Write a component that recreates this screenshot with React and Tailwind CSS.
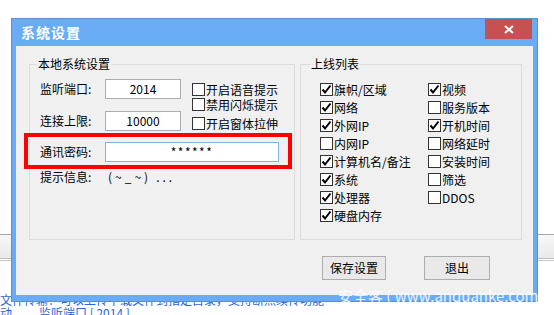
import { Fragment } from 'react'

const font = "font-['Noto_Sans_CJK_SC','Liberation_Sans',sans-serif]"

function Check({ on }) {
  return (
    <span className="w-[13px] h-[13px] border border-[#333] bg-white flex items-center justify-center shrink-0">
      {on && (
        <svg width="11" height="11" viewBox="0 0 11 11">
          <path d="M1.5 5.5 L4 8.5 L9.5 1.5" fill="none" stroke="#000" strokeWidth="2" />
        </svg>
      )}
    </span>
  )
}

function CheckItem({ on, label, className = '' }) {
  return (
    <div className={`flex items-center h-[13px] gap-[1px] text-[12px] leading-none whitespace-nowrap ${className}`}>
      <Check on={on} />
      <span>{label}</span>
    </div>
  )
}

const online = [
  ['旗帜/区域', true, '视频', true],
  ['网络', true, '服务版本', false],
  ['外网IP', true, '开机时间', true],
  ['内网IP', false, '网络延时', false],
  ['计算机名/备注', true, '安装时间', false],
  ['系统', true, '筛选', false],
  ['处理器', true, 'DDOS', false],
  ['硬盘内存', true, null, false],
]

export default function App() {
  return (
    <div className={`relative w-[554px] h-[315px] overflow-hidden bg-white text-black ${font}`}>
      {/* page behind the dialog */}
      <div className="flex flex-col">
        <div className="h-[234px]" />
        <div className="h-[1px] bg-[#A6A6A6]" />
        <div className="h-[23px] bg-gradient-to-b from-[#F8F8F8] to-[#E9E9E9]" />
        <div className="h-[1px] bg-[#BDBDBD]" />
        <div className="h-[1px] bg-white" />
        <div className="h-[1px] bg-[#C8C8C8]" />
        <div className="h-[32px]" />
        <div className="h-[13px] text-[12px] leading-[13px] text-[#2B63D9] whitespace-nowrap">
          文件传输：可以上传下载文件到指定目录，支持断点续传功能
        </div>
        <div className="h-[13px] flex text-[12px] leading-[13px] text-[#2B63D9] whitespace-nowrap">
          <span className="w-[39px]">动</span>
          <span>监听端口 [ 2014 ]</span>
        </div>
      </div>

      {/* dialog window */}
      <div className="absolute left-[11px] top-[18px] w-[527px] h-[284px] border border-[#5B8FD2] bg-[#6AABF5] flex flex-col px-[4px] pb-[6px]">
        <div className="h-[27px] flex justify-between shrink-0">
          <span className="pl-[5px] pt-[6px] text-[14px] leading-[14px] font-bold text-white tracking-[1px]">系统设置</span>
          <div className="w-[47px] h-[20px] mr-[1px] bg-[#C75050] flex items-center justify-center">
            <svg width="10" height="9" viewBox="0 0 10 9">
              <path d="M1 1 L9 8 M9 1 L1 8" stroke="#fff" strokeWidth="2" />
            </svg>
          </div>
        </div>

        <div className="relative flex-1 bg-[#F0F0F0] flex flex-col">
          <div className="flex gap-[5px] pt-[18px] pl-[13px]">
            {/* 本地系统设置 */}
            <div className="relative w-[266px] h-[176px] border border-[#DCDCDC]">
              <span className="absolute left-[7px] -top-[8px] px-[1px] bg-[#F0F0F0] text-[12px] leading-[14px]">本地系统设置</span>
              <div className="flex">
                <div className="flex flex-col pl-[10px] pt-[14px]">
                  <div className="flex items-center h-[20px]">
                    <span className="w-[65px] text-[12px]">监听端口:</span>
                    <div className="w-[76px] h-[20px] border border-[#ABADB3] bg-white flex items-center justify-center text-[12px]">2014</div>
                  </div>
                  <div className="flex items-center h-[20px] mt-[12px]">
                    <span className="w-[65px] text-[12px]">连接上限:</span>
                    <div className="w-[76px] h-[20px] border border-[#ABADB3] bg-white flex items-center justify-center text-[12px]">10000</div>
                  </div>
                </div>
                <div className="flex flex-col pl-[11px] pt-[18px]">
                  <CheckItem label="开启语音提示" />
                  <CheckItem label="禁用闪烁提示" className="mt-[2px]" />
                  <CheckItem label="开启窗体拉伸" className="mt-[6px]" />
                </div>
              </div>
              <div className="flex items-center h-[20px] mt-[11px] pl-[10px]">
                <span className="w-[65px] text-[12px]">通讯密码:</span>
                <div className="w-[174px] h-[20px] border border-[#7EB4EA] bg-white flex items-center justify-center text-[12px] tracking-[1.5px]">******</div>
              </div>
              <div className="flex items-center h-[14px] mt-[8px] pl-[10px] text-[12px]">
                <span className="w-[68px]">提示信息:</span>
                <span className="tracking-[3px]">(~_~)</span>
                <span className="ml-[5px] tracking-[3px]">...</span>
              </div>
            </div>

            {/* 上线列表 */}
            <div className="relative w-[222px] h-[176px] border border-[#DCDCDC]">
              <span className="absolute left-[9px] -top-[8px] px-[1px] bg-[#F0F0F0] text-[12px] leading-[14px]">上线列表</span>
              <div className="grid grid-cols-[108px_auto] auto-rows-[18px] pl-[19px] pt-[18px]">
                {online.map(([a, aOn, b, bOn]) => (
                  <Fragment key={a}>
                    <CheckItem label={a} on={aOn} />
                    {b ? <CheckItem label={b} on={bOn} /> : <span />}
                  </Fragment>
                ))}
              </div>
            </div>
          </div>

          <div className="flex gap-[38px] pl-[306px] mt-[16px]">
            <button className="w-[64px] h-[24px] border border-[#ADADAD] bg-[#E9E9E9] text-[12px]">保存设置</button>
            <button className="w-[66px] h-[24px] border border-[#ADADAD] bg-[#E9E9E9] text-[12px]">退出</button>
          </div>

          {/* red annotation */}
          <div className="absolute left-[8px] top-[87px] w-[268px] h-[36px] border-[4px] border-[#FF0000]" />
        </div>
      </div>

      {/* watermark */}
      <span className="absolute left-[338px] top-[287px] text-[15px] leading-[17px] text-white/85 whitespace-nowrap">
        安全客 ( www.anquanke.com )
      </span>
    </div>
  )
}
